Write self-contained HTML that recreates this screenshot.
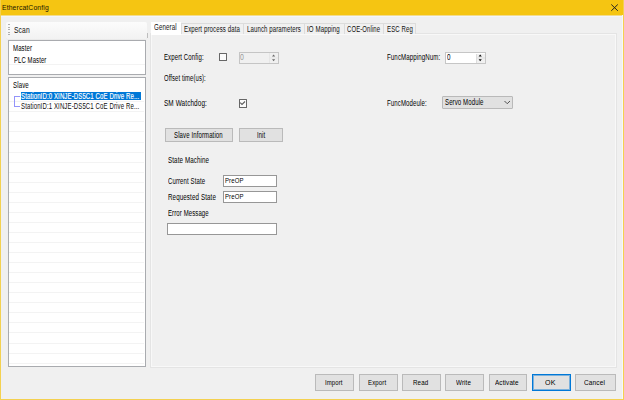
<!DOCTYPE html>
<html><head><meta charset="utf-8"><style>
html,body{margin:0;padding:0;}
body{width:624px;height:400px;position:relative;overflow:hidden;background:#f0f0f0;font-family:"Liberation Sans",sans-serif;}
body>div{position:absolute;}
.t{white-space:nowrap;line-height:10px;transform-origin:0 0;}
svg{position:absolute;}
</style></head><body>
<div style="left:0px;top:0px;width:624px;height:15px;background:#f5c512"></div>
<div style="left:0px;top:0px;width:1px;height:400px;background:#f4d150"></div>
<div style="left:623px;top:0px;width:1px;height:400px;background:#f4d150"></div>
<div style="left:0px;top:399px;width:624px;height:1px;background:#f4d150"></div>
<div style="left:1px;top:15px;width:622px;height:1px;background:#f3dc8c"></div>
<div style="left:1px;top:16px;width:622px;height:1px;background:#f2f5fb"></div>
<div style="left:622px;top:15px;width:1px;height:384px;background:#f6f8fc"></div>
<div class="t" style="left:2.46px;top:3.00px;font-size:7.4px;letter-spacing:0.15px;transform:scaleX(0.918);color:#1a1400;">EthercatConfig</div>
<svg style="position:absolute;left:610px;top:3px" width="10" height="9"><path d="M1.3 1.5 L7.8 7.8 M7.8 1.5 L1.3 7.8" stroke="#222" stroke-width="1"/></svg>
<div style="left:6px;top:22px;width:141px;height:16.5px;background:linear-gradient(#fcfcfc,#f2f2f2);border-radius:2px;box-shadow:0 0.5px 0 #e4e4e4"></div>
<div style="left:8.2px;top:24.3px;width:1.6px;height:1.2px;background:#b0b0b0"></div>
<div style="left:8.2px;top:26.75px;width:1.6px;height:1.2px;background:#b0b0b0"></div>
<div style="left:8.2px;top:29.200000000000003px;width:1.6px;height:1.2px;background:#b0b0b0"></div>
<div style="left:8.2px;top:31.650000000000002px;width:1.6px;height:1.2px;background:#b0b0b0"></div>
<div style="left:8.2px;top:34.1px;width:1.6px;height:1.2px;background:#b0b0b0"></div>
<div class="t" style="left:14.41px;top:25.00px;font-size:8.4px;letter-spacing:0.15px;transform:scaleX(0.806);color:#111;">Scan</div>
<div style="left:146.6px;top:33px;width:1px;height:4.5px;background:#bdbdbd"></div>
<div style="left:8px;top:40px;width:138px;height:34.5px;background:#fff;border:1px solid #a9abaf;box-sizing:border-box"></div>
<div class="t" style="left:12.90px;top:43.00px;font-size:8.4px;letter-spacing:0.15px;transform:scaleX(0.722);color:#000;">Master</div>
<div class="t" style="left:13.50px;top:55.00px;font-size:8.4px;letter-spacing:0.15px;transform:scaleX(0.708);color:#000;">PLC Master</div>
<div style="left:9px;top:64px;width:136px;height:1px;background:#f3f3f3"></div>
<div style="left:8px;top:77px;width:138px;height:289.5px;background:#fff;border:1px solid #a9abaf;box-sizing:border-box"></div>
<div class="t" style="left:12.89px;top:80.00px;font-size:8.4px;letter-spacing:0.15px;transform:scaleX(0.731);color:#000;">Slave</div>
<div style="left:9px;top:101.3px;width:135px;height:1px;background:#f3f3f3"></div>
<div style="left:9px;top:111.35px;width:135px;height:1px;background:#f3f3f3"></div>
<div style="left:9px;top:121.4px;width:135px;height:1px;background:#f3f3f3"></div>
<div style="left:9px;top:131.45px;width:135px;height:1px;background:#f3f3f3"></div>
<div style="left:9px;top:141.5px;width:135px;height:1px;background:#f3f3f3"></div>
<div style="left:9px;top:151.55px;width:135px;height:1px;background:#f3f3f3"></div>
<div style="left:9px;top:161.6px;width:135px;height:1px;background:#f3f3f3"></div>
<div style="left:9px;top:171.65px;width:135px;height:1px;background:#f3f3f3"></div>
<div style="left:9px;top:181.7px;width:135px;height:1px;background:#f3f3f3"></div>
<div style="left:9px;top:191.75px;width:135px;height:1px;background:#f3f3f3"></div>
<div style="left:9px;top:201.8px;width:135px;height:1px;background:#f3f3f3"></div>
<div style="left:9px;top:211.85px;width:135px;height:1px;background:#f3f3f3"></div>
<div style="left:9px;top:221.9px;width:135px;height:1px;background:#f3f3f3"></div>
<div style="left:9px;top:231.95px;width:135px;height:1px;background:#f3f3f3"></div>
<div style="left:9px;top:242.0px;width:135px;height:1px;background:#f3f3f3"></div>
<div style="left:9px;top:252.05px;width:135px;height:1px;background:#f3f3f3"></div>
<div style="left:9px;top:262.1px;width:135px;height:1px;background:#f3f3f3"></div>
<div style="left:9px;top:272.15px;width:135px;height:1px;background:#f3f3f3"></div>
<div style="left:9px;top:282.2px;width:135px;height:1px;background:#f3f3f3"></div>
<div style="left:9px;top:292.25px;width:135px;height:1px;background:#f3f3f3"></div>
<div style="left:9px;top:302.3px;width:135px;height:1px;background:#f3f3f3"></div>
<div style="left:9px;top:312.35px;width:135px;height:1px;background:#f3f3f3"></div>
<div style="left:9px;top:322.4px;width:135px;height:1px;background:#f3f3f3"></div>
<div style="left:9px;top:332.45px;width:135px;height:1px;background:#f3f3f3"></div>
<div style="left:9px;top:342.5px;width:135px;height:1px;background:#f3f3f3"></div>
<div style="left:9px;top:352.55px;width:135px;height:1px;background:#f3f3f3"></div>
<div style="left:9px;top:362.6px;width:135px;height:1px;background:#f3f3f3"></div>
<div style="left:20.6px;top:92px;width:120.1px;height:8px;background:#0078d7"></div>
<div class="t" style="left:21.20px;top:91.00px;font-size:8.4px;letter-spacing:0.15px;transform:scaleX(0.723);color:#fff;-webkit-text-stroke:0.15px #fff;">StationID:0 XINJE-DS5C1 CoE Drive Re...</div>
<div class="t" style="left:21.20px;top:101.00px;font-size:8.4px;letter-spacing:0.15px;transform:scaleX(0.723);color:#111;">StationID:1 XINJE-DS5C1 CoE Drive Re...</div>
<div style="left:14px;top:96px;width:1px;height:11px;background:#9494fa"></div>
<div style="left:14px;top:96px;width:6px;height:1px;background:#9494fa"></div>
<div style="left:14px;top:106px;width:6px;height:1px;background:#9494fa"></div>
<div style="left:150px;top:33px;width:467px;height:334.5px;background:#f0f0f0;border:1px solid #e4e4e4;box-shadow:inset 0 0 0 1px #f8f8f8;box-sizing:border-box"></div>
<div style="left:181px;top:23px;width:62px;height:11px;background:#f0f0f0;border-left:1px solid #dcdcdc;border-top:1px solid #dcdcdc;box-sizing:border-box"></div>
<div class="t" style="left:183.50px;top:24.00px;font-size:8.4px;letter-spacing:0.15px;transform:scaleX(0.723);color:#111;">Expert process data</div>
<div style="left:243px;top:23px;width:61px;height:11px;background:#f0f0f0;border-left:1px solid #dcdcdc;border-top:1px solid #dcdcdc;box-sizing:border-box"></div>
<div class="t" style="left:246.70px;top:24.00px;font-size:8.4px;letter-spacing:0.15px;transform:scaleX(0.722);color:#111;">Launch parameters</div>
<div style="left:304px;top:23px;width:40px;height:11px;background:#f0f0f0;border-left:1px solid #dcdcdc;border-top:1px solid #dcdcdc;box-sizing:border-box"></div>
<div class="t" style="left:307.39px;top:24.00px;font-size:8.4px;letter-spacing:0.15px;transform:scaleX(0.732);color:#111;">IO Mapping</div>
<div style="left:344px;top:23px;width:39px;height:11px;background:#f0f0f0;border-left:1px solid #dcdcdc;border-top:1px solid #dcdcdc;box-sizing:border-box"></div>
<div class="t" style="left:347.00px;top:24.00px;font-size:8.4px;letter-spacing:0.15px;transform:scaleX(0.711);color:#111;">COE-Online</div>
<div style="left:383px;top:23px;width:33px;height:11px;background:#f0f0f0;border-left:1px solid #dcdcdc;border-top:1px solid #dcdcdc;border-right:1px solid #dcdcdc;box-sizing:border-box"></div>
<div class="t" style="left:387.20px;top:24.00px;font-size:8.4px;letter-spacing:0.15px;transform:scaleX(0.723);color:#111;">ESC Reg</div>
<div style="left:150.5px;top:21.5px;width:30.6px;height:13.2px;background:#fff"></div>
<div class="t" style="left:153.94px;top:22.00px;font-size:8.4px;letter-spacing:0.15px;transform:scaleX(0.736);color:#111;">General</div>
<div class="t" style="left:164.00px;top:52.00px;font-size:8.4px;letter-spacing:0.15px;transform:scaleX(0.719);color:#000;">Expert Config:</div>
<div style="left:218.5px;top:53px;width:8.4px;height:8.2px;background:#fbfbfb;border:1px solid #666;border-radius:0.5px;box-sizing:border-box"></div>
<div style="left:239.25px;top:52.3px;width:39.6px;height:11.4px;background:#f0f0f0;border:1px solid #c5c5c5;box-sizing:border-box"></div>
<div style="left:269.2px;top:53px;width:1px;height:10px;background:#e6e6e6"></div>
<div class="t" style="left:240.05px;top:52.00px;font-size:8.4px;letter-spacing:0.15px;transform:scaleX(0.825);color:#9a9a9a;">0</div>
<svg style="position:absolute;left:269px;top:52px" width="10" height="12"><path d="M3 4.6 L4.6 2.6 L6.2 4.6 Z M3 7.2 L4.6 9.2 L6.2 7.2 Z" fill="#6a6a6a"/><rect x="1" y="5.6" width="8" height="0.8" fill="#e4e4e4"/></svg>
<div class="t" style="left:164.01px;top:73.00px;font-size:8.4px;letter-spacing:0.15px;transform:scaleX(0.702);color:#000;">Offset time(us):</div>
<div class="t" style="left:164.48px;top:98.00px;font-size:8.4px;letter-spacing:0.15px;transform:scaleX(0.762);color:#000;">SM Watchdog:</div>
<div style="left:239px;top:99.2px;width:8.2px;height:8.6px;background:#fbfbfb;border:1px solid #666;border-radius:0.5px;box-sizing:border-box"></div>
<svg style="position:absolute;left:239px;top:99px" width="9" height="9"><path d="M1.2 3.6 L3 5.5 L6 2.5" stroke="#5c5c5c" stroke-width="1.1" fill="none"/></svg>
<div class="t" style="left:386.99px;top:52.00px;font-size:8.4px;letter-spacing:0.15px;transform:scaleX(0.731);color:#000;">FuncMappingNum:</div>
<div style="left:445.1px;top:52px;width:40.6px;height:12px;background:#fff;border:1px solid #c6c6c6;box-sizing:border-box"></div>
<div style="left:476px;top:53.5px;width:8.7px;height:9px;background:#f0f0f0;border-left:1px solid #dcdcdc;box-sizing:border-box"></div>
<div class="t" style="left:446.69px;top:52.00px;font-size:8.4px;letter-spacing:0.15px;transform:scaleX(0.750);color:#000;">0</div>
<svg style="position:absolute;left:476px;top:52px" width="10" height="12"><path d="M2.6 4.6 L4.2 2.6 L5.8 4.6 Z M2.6 7.2 L4.2 9.2 L5.8 7.2 Z" fill="#111"/><rect x="0.5" y="5.6" width="8.5" height="0.8" fill="#dadada"/></svg>
<div class="t" style="left:387.30px;top:98.00px;font-size:8.4px;letter-spacing:0.15px;transform:scaleX(0.723);color:#000;">FuncModeule:</div>
<div style="left:442.1px;top:96px;width:70.65px;height:12.5px;background:#e1e1e1;border:1px solid #b9b9b9;border-radius:1px;box-sizing:border-box"></div>
<div class="t" style="left:444.50px;top:97.00px;font-size:8.4px;letter-spacing:0.15px;transform:scaleX(0.721);color:#000;">Servo Module</div>
<svg style="position:absolute;left:503px;top:99px" width="8" height="6"><path d="M1.5 2 L4.2 4.7 L7 2" stroke="#505050" stroke-width="1" fill="none"/></svg>
<div style="left:165.2px;top:128.25px;width:67.70000000000002px;height:13.550000000000011px;background:#e1e1e1;border:1px solid #bababa;box-sizing:border-box"></div>
<div class="t" style="left:174.30px;top:130.00px;font-size:8.4px;letter-spacing:0.15px;transform:scaleX(0.720);color:#000;">Slave Information</div>
<div style="left:239.2px;top:128.25px;width:43.69999999999999px;height:13.550000000000011px;background:#e1e1e1;border:1px solid #bababa;box-sizing:border-box"></div>
<div class="t" style="left:256.61px;top:130.00px;font-size:8.4px;letter-spacing:0.15px;transform:scaleX(0.701);color:#000;">Init</div>
<div class="t" style="left:167.99px;top:155.00px;font-size:8.4px;letter-spacing:0.15px;transform:scaleX(0.742);color:#000;">State Machine</div>
<div class="t" style="left:168.45px;top:176.00px;font-size:8.4px;letter-spacing:0.15px;transform:scaleX(0.717);color:#000;">Current State</div>
<div style="left:223.1px;top:175px;width:53.9px;height:12.1px;background:#fff;border:1px solid #979797;box-sizing:border-box"></div>
<div class="t" style="left:225.40px;top:176.00px;font-size:7.8px;letter-spacing:0.15px;transform:scaleX(0.770);color:#000;">PreOP</div>
<div class="t" style="left:168.44px;top:192.00px;font-size:8.4px;letter-spacing:0.15px;transform:scaleX(0.742);color:#000;">Requested State</div>
<div style="left:223.1px;top:191px;width:53.9px;height:11.5px;background:#fff;border:1px solid #979797;box-sizing:border-box"></div>
<div class="t" style="left:225.40px;top:192.00px;font-size:7.8px;letter-spacing:0.15px;transform:scaleX(0.770);color:#000;">PreOP</div>
<div class="t" style="left:168.45px;top:208.00px;font-size:8.4px;letter-spacing:0.15px;transform:scaleX(0.716);color:#000;">Error Message</div>
<div style="left:167.3px;top:223.3px;width:109.7px;height:11.5px;background:#fff;border:1px solid #979797;box-sizing:border-box"></div>
<div style="left:315.3px;top:374px;width:38.69999999999999px;height:17px;background:#e1e1e1;border:1px solid #bababa;box-sizing:border-box"></div>
<div class="t" style="left:325.30px;top:378.00px;font-size:7.5px;letter-spacing:0.15px;transform:scaleX(0.794);color:#000;">Import</div>
<div style="left:358.9px;top:374px;width:38.80000000000001px;height:17px;background:#e1e1e1;border:1px solid #bababa;box-sizing:border-box"></div>
<div class="t" style="left:368.20px;top:378.00px;font-size:7.5px;letter-spacing:0.15px;transform:scaleX(0.806);color:#000;">Export</div>
<div style="left:402.3px;top:374px;width:38.5px;height:17px;background:#e1e1e1;border:1px solid #bababa;box-sizing:border-box"></div>
<div class="t" style="left:413.49px;top:378.00px;font-size:7.5px;letter-spacing:0.15px;transform:scaleX(0.827);color:#000;">Read</div>
<div style="left:445.3px;top:374px;width:38.69999999999999px;height:17px;background:#e1e1e1;border:1px solid #bababa;box-sizing:border-box"></div>
<div class="t" style="left:456.49px;top:378.00px;font-size:7.5px;letter-spacing:0.15px;transform:scaleX(0.832);color:#000;">Write</div>
<div style="left:488.9px;top:374px;width:38.39999999999998px;height:17px;background:#e1e1e1;border:1px solid #bababa;box-sizing:border-box"></div>
<div class="t" style="left:495.48px;top:378.00px;font-size:7.5px;letter-spacing:0.15px;transform:scaleX(0.848);color:#000;">Activate</div>
<div style="left:532px;top:374px;width:38.700000000000045px;height:17px;background:#e1e1e1;border:1px solid #0078d7;box-shadow:inset 0 0 0 1px rgba(0,120,215,0.45);box-sizing:border-box"></div>
<div class="t" style="left:545.25px;top:378.00px;font-size:7.5px;letter-spacing:0.15px;transform:scaleX(0.943);color:#000;">OK</div>
<div style="left:575px;top:374px;width:40.89999999999998px;height:17px;background:#e1e1e1;border:1px solid #bababa;box-sizing:border-box"></div>
<div class="t" style="left:584.38px;top:378.00px;font-size:7.5px;letter-spacing:0.15px;transform:scaleX(0.864);color:#000;">Cancel</div>
</body></html>
